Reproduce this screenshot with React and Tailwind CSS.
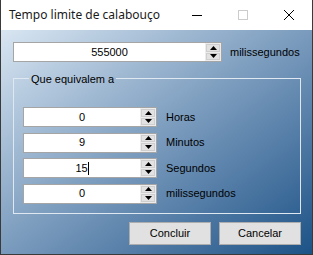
import React from "react";

const Spin = ({ value, caret = false, width = "w-[209px]" }) => (
  <div className={`${width} h-[20px] flex bg-white border border-[#a5a5a5]`}>
    <div className="flex-1 flex items-center justify-center text-[11px] text-black leading-none">
      <span>{value}</span>
      {caret && <span className="w-px h-[13px] bg-black"></span>}
    </div>
    <div className="w-[16px] flex flex-col bg-[#ececec] p-px gap-px">
      <div className="flex-1 flex items-center justify-center bg-[#e2e2e2] border border-[#cfcfcf]">
        <svg width="7" height="4" viewBox="0 0 7 4">
          <path d="M3.5 0 L7 4 L0 4 Z" fill="#000" />
        </svg>
      </div>
      <div className="flex-1 flex items-center justify-center bg-[#e2e2e2] border border-[#cfcfcf]">
        <svg width="7" height="4" viewBox="0 0 7 4">
          <path d="M0 0 L7 0 L3.5 4 Z" fill="#000" />
        </svg>
      </div>
    </div>
  </div>
);

const rows = [
  { value: "0", label: "Horas" },
  { value: "9", label: "Minutos" },
  { value: "15", label: "Segundos", caret: true },
  { value: "0", label: "milissegundos" },
];

export default function App() {
  return (
    <div
      className="w-[313px] h-[255px] flex flex-col border-x border-b border-[#3a3a3a] bg-white"
      style={{ fontFamily: '"Liberation Sans", Arial, sans-serif' }}
    >
      {/* title bar */}
      <div className="h-[30px] flex items-center bg-white">
        <span
          className="pl-[8px] flex-1 text-[12px] text-[#1a1a1a]"
          style={{ fontFamily: '"Noto Sans", sans-serif' }}
        >
          Tempo limite de calabouço
        </span>
        <div className="w-[46px] h-full flex items-center justify-center">
          <div className="w-[10px] h-px bg-black"></div>
        </div>
        <div className="w-[46px] h-full flex items-center justify-center">
          <div className="w-[10px] h-[10px] border border-[#cccccc]"></div>
        </div>
        <div className="w-[46px] h-full flex items-center justify-center">
          <svg width="10" height="10" viewBox="0 0 10 10">
            <path d="M0 0 L10 10 M10 0 L0 10" stroke="#000" strokeWidth="1" />
          </svg>
        </div>
      </div>

      {/* body */}
      <div className="flex-1 flex flex-col bg-linear-to-br from-[#d9e6f2] to-[#1b5387] px-[12px] pt-[12px]">
        <div className="flex items-center gap-[8px]">
          <Spin value="555000" />
          <span className="text-[11px] text-black">milissegundos</span>
        </div>

        <fieldset className="mt-[9px] w-[288px] border border-[#dfe8f0] pl-[9px] pb-[9px]">
          <legend className="ml-[6px] px-[2px] leading-[13px]">
            <span className="text-[11px] text-black">Que equivalem a</span>
          </legend>
          <div className="flex flex-col gap-[5.5px] pt-[21px]">
            {rows.map((r) => (
              <div key={r.label} className="flex items-center gap-[9px]">
                <Spin value={r.value} caret={r.caret} width="w-[134px]" />
                <span className="text-[11px] text-black">{r.label}</span>
              </div>
            ))}
          </div>
        </fieldset>

        <div className="flex justify-end gap-[8px] mt-[8px] w-[288px]">
          <button className="w-[82px] h-[23px] bg-[#e1e1e1] border border-[#adadad] text-[11px] text-black">
            Concluir
          </button>
          <button className="w-[82px] h-[23px] bg-[#e1e1e1] border border-[#adadad] text-[11px] text-black">
            Cancelar
          </button>
        </div>
      </div>
    </div>
  );
}
